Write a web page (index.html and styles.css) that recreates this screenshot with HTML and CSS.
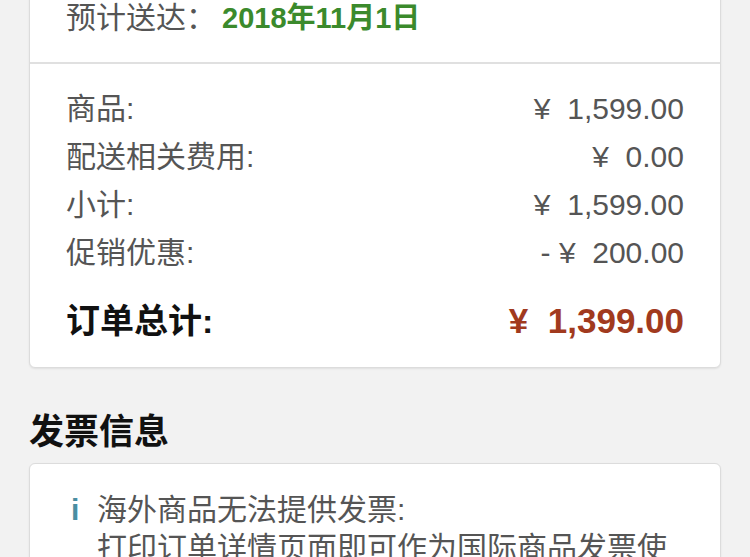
FILE: index.html
```html
<!DOCTYPE html>
<html lang="zh-CN">
<head>
<meta charset="utf-8">
<title>订单</title>
<link rel="stylesheet" href="styles.css">
</head>
<body>
<div class="page">
  <section class="card card-top">
    <div class="delivery">
      <span class="label">预计送达：</span><span class="date">2018年11月1日</span>
    </div>
    <div class="summary">
      <div class="row"><span>商品:</span><span>¥&nbsp; 1,599.00</span></div>
      <div class="row"><span>配送相关费用:</span><span>¥&nbsp; 0.00</span></div>
      <div class="row"><span>小计:</span><span>¥&nbsp; 1,599.00</span></div>
      <div class="row"><span>促销优惠:</span><span>- ¥&nbsp; 200.00</span></div>
      <div class="row total"><span class="total-label">订单总计:</span><span class="total-amount">¥&nbsp; 1,399.00</span></div>
    </div>
  </section>

  <h2 class="heading">发票信息</h2>

  <section class="card card-invoice">
    <div class="notice">
      <span class="icon">i</span>
      <p class="notice-text">海外商品无法提供发票:<br>打印订单详情页面即可作为国际商品发票使用</p>
    </div>
  </section>
</div>
</body>
</html>
```

FILE: styles.css
```css
* { box-sizing: border-box; }

html, body {
  margin: 0;
  padding: 0;
  background: #f2f2f2;
  font-family: "Liberation Sans", "Noto Sans CJK SC", sans-serif;
  color: #555;
  overflow: hidden;
}

.page {
  padding: 0 29px;
  margin-top: -20px;
}

.card {
  background: #fff;
  border: 1px solid #dcdcdc;
  border-radius: 6px;
  box-shadow: 0 1px 2px rgba(0, 0, 0, 0.08);
}

.delivery {
  padding: 17px 36px 24px;
  font-size: 30px;
  line-height: 40px;
  border-bottom: 2px solid #e0e0e0;
  display: flex;
  align-items: baseline;
}

.delivery .label {
  color: #555;
  width: 156px;
}

.delivery .date {
  color: #3b8a2c;
  font-weight: bold;
  font-size: 29px;
}

.summary {
  padding: 21px 36px 22px;
}

.row {
  display: flex;
  justify-content: space-between;
  font-size: 30px;
  line-height: 48px;
}

.row.total {
  margin-top: 20px;
  font-weight: bold;
}

.total-label {
  color: #111;
  font-size: 34px;
}

.total-amount {
  color: #a13a1e;
  font-size: 35px;
}

.heading {
  margin: 39px 0 6px;
  font-size: 35px;
  line-height: 50px;
  color: #111;
  font-weight: bold;
}

.card-invoice {
  padding: 27px 36px 40px;
  min-height: 200px;
}

.notice {
  display: flex;
  align-items: flex-start;
}

.icon {
  width: 31px;
  padding-left: 5px;
  color: #4a8ea2;
  font-size: 30px;
  font-weight: bold;
  line-height: 38px;
  flex: none;
}

.notice-text {
  margin: 0;
  font-size: 30px;
  line-height: 38px;
  color: #555;
}
```
